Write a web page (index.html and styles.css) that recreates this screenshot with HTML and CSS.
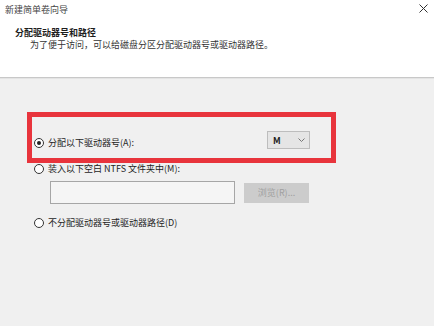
FILE: index.html
```html
<!DOCTYPE html>
<html lang="zh-CN">
<head>
<meta charset="UTF-8">
<title>新建简单卷向导</title>
<link rel="stylesheet" href="styles.css">
</head>
<body>

<!-- Header -->
<div class="header">
    <div class="title-bar">
        <span class="title">新建简单卷向导</span>
        <svg class="close" width="9" height="9" viewBox="0 0 9 9">
            <path d="M0.5 0.5 L8.5 8.5 M8.5 0.5 L0.5 8.5" stroke="#333" stroke-width="1" fill="none"/>
        </svg>
    </div>
    <h1 class="heading">分配驱动器号和路径</h1>
    <p class="subtitle">为了便于访问，可以给磁盘分区分配驱动器号或驱动器路径。</p>
</div>

<!-- Options -->
<div class="content">
    <div class="option-row">
        <label class="radio-label first">
            <span class="radio checked"></span>
            分配以下驱动器号(A):
        </label>
        <div class="select">
            <b>M</b>
            <svg width="7" height="4" viewBox="0 0 7 4">
                <path d="M0.5 0.5 L3.5 3.5 L6.5 0.5" stroke="#777" stroke-width="1" fill="none"/>
            </svg>
        </div>
    </div>

    <label class="radio-label second">
        <span class="radio"></span>
        装入以下空白 NTFS 文件夹中(M):
    </label>

    <div class="path-row">
        <div class="path-input"></div>
        <div class="browse-button">浏览(R)...</div>
    </div>

    <label class="radio-label third">
        <span class="radio"></span>
        不分配驱动器号或驱动器路径(D)
    </label>

    <!-- highlight annotation -->
    <div class="highlight"></div>
</div>

</body>
</html>
```

FILE: styles.css
```css
* {
    box-sizing: border-box;
    margin: 0;
    padding: 0;
}

body {
    width: 434px;
    height: 326px;
    overflow: hidden;
    background-color: #f0f0f0;
    color: #1e1e1e;
    font-family: "Noto Sans CJK SC", "Noto Sans", sans-serif;
    font-size: 9px;
}

.header {
    height: 78px;
    background-color: #ffffff;
    border-bottom: 1px solid #c8c8c8;
    box-shadow: 0 1px 0 #e4e4e4;
}

.title-bar {
    height: 18px;
    display: flex;
    justify-content: space-between;
    align-items: center;
    padding: 0 6px 0 5px;
    color: #444;
}

.title-bar .close {
    margin-top: -1px;
}

.heading {
    margin-top: 9px;
    padding-left: 15px;
    font-size: 9px;
    font-weight: bold;
    line-height: 12px;
}

.subtitle {
    padding-left: 30px;
    line-height: 12px;
    color: #333;
}

.content {
    position: relative;
    padding: 53px 0 0 34px;
}

.option-row {
    display: grid;
    grid-template-columns: 233px 43px;
    align-items: center;
    height: 18px;
}

.radio-label {
    display: flex;
    align-items: center;
    gap: 4px;
    height: 12px;
    line-height: 12px;
}

.radio-label.first {
    align-self: end;
}

.radio-label.second {
    margin-top: 14px;
}

.radio-label.third {
    margin-top: 13px;
}

.radio {
    width: 10px;
    height: 10px;
    border: 1px solid #333;
    border-radius: 50%;
    background-color: #fff;
    display: flex;
    align-items: center;
    justify-content: center;
}

.radio.checked::after {
    content: "";
    width: 4px;
    height: 4px;
    border-radius: 50%;
    background-color: #222;
}

.select {
    height: 18px;
    display: flex;
    align-items: center;
    justify-content: space-between;
    padding: 0 4px 0 5px;
    background-color: #e5e5e5;
    border: 1px solid #bdbdbd;
}

.select b {
    font-size: 9px;
}

.path-row {
    display: flex;
    align-items: center;
    gap: 9px;
    margin-top: 6px;
    padding-left: 16px;
}

.path-input {
    width: 185px;
    height: 23px;
    background-color: #f5f5f5;
    border: 1px solid #a6a6a6;
}

.browse-button {
    width: 65px;
    height: 20px;
    line-height: 20px;
    text-align: center;
    background-color: #cccccc;
    color: #a0a0a0;
}

.highlight {
    position: absolute;
    left: 27px;
    top: 34px;
    width: 309px;
    height: 51px;
    border: 5px solid #e8343c;
}
```
